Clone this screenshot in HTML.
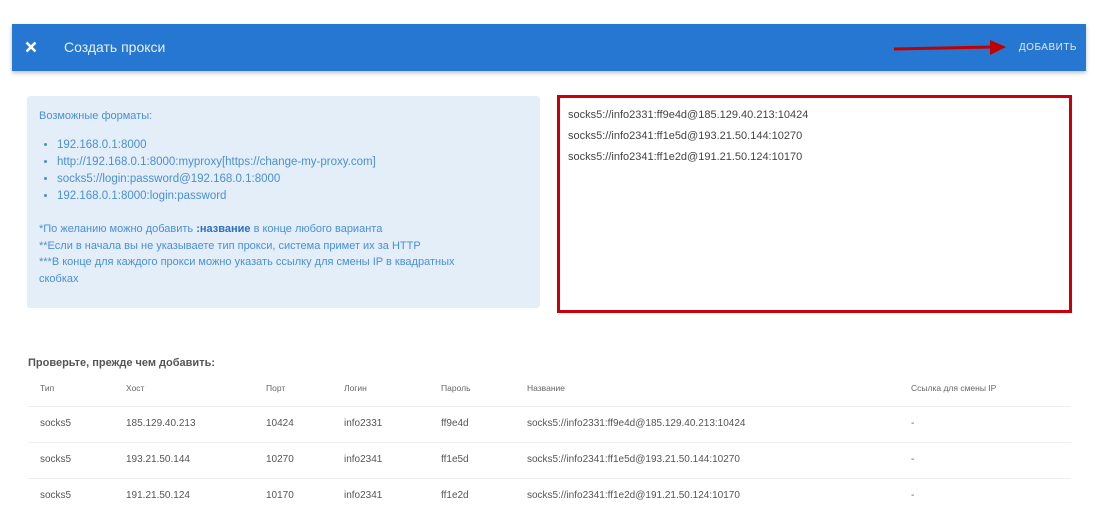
<!DOCTYPE html>
<html><head><meta charset="utf-8"><style>
body{margin:0;width:1099px;height:532px;background:#fff;font-family:"Liberation Sans",sans-serif;position:relative;overflow:hidden}
.hdr{position:absolute;left:12px;top:24px;width:1074px;height:47px;background:#2677d2;box-shadow:0 2px 4px rgba(0,0,0,.25)}
.hdr .t{position:absolute;left:52px;top:15px;color:#e8f0fb;font-size:14px}
.hdr .add{position:absolute;right:9px;top:18px;color:#dfe9f7;font-size:10px;letter-spacing:.5px}
.info{position:absolute;left:27px;top:96px;width:513px;height:212px;background:#e3eef9;border-radius:3px;color:#4a8fd6;font-size:11px}
.info p{margin:0;position:absolute;left:12px}
.info ul{margin:0;padding-left:30px;position:absolute;top:41px;line-height:17px;font-size:11.5px;list-style:disc}
.ta{position:absolute;left:557px;top:95px;width:509px;height:212px;border:3px solid #c8000a;color:#444;font-size:11px}
.ta div{position:absolute;left:8px}
.tt{position:absolute;left:28px;top:357px;font-size:11px;color:#555;font-weight:bold}
.c{position:absolute;font-size:10px;color:#555}
.h{font-size:8.5px;color:#666}
.ln{position:absolute;left:28px;width:1043px;height:1px;background:#eee}
</style></head><body>
<div class="hdr">
<svg style="position:absolute;left:13px;top:17px" width="12" height="12" viewBox="0 0 12 12"><path d="M1.5 1.5L10.5 10.5M10.5 1.5L1.5 10.5" stroke="#fff" stroke-width="2.6"/></svg>
<div class="t">Создать прокси</div>
<svg style="position:absolute;left:880px;top:15px" width="116" height="18" viewBox="0 0 116 18"><path d="M2 10L100 8" stroke="#c00000" stroke-width="3"/><path d="M98 1L114 8L98 16Z" fill="#c00000"/></svg>
<div class="add">ДОБАВИТЬ</div>
</div>
<div class="info">
<p style="top:14px">Возможные форматы:</p>
<ul><li>192.168.0.1:8000</li><li>http://192.168.0.1:8000:myproxy[https://change-my-proxy.com]</li><li>socks5://login:password@192.168.0.1:8000</li><li>192.168.0.1:8000:login:password</li></ul>
<p style="top:125px;line-height:16.5px">*По желанию можно добавить <b style="color:#2c6fc0">:название</b> в конце любого варианта<br>**Если в начала вы не указываете тип прокси, система примет их за HTTP<br>***В конце для каждого прокси можно указать ссылку для смены IP в квадратных<br>скобках</p>
</div>
<div class="ta">
<div style="top:11px">socks5://info2331:ff9e4d@185.129.40.213:10424</div>
<div style="top:32px">socks5://info2341:ff1e5d@193.21.50.144:10270</div>
<div style="top:53px">socks5://info2341:ff1e2d@191.21.50.124:10170</div>
</div>
<div class="tt">Проверьте, прежде чем добавить:</div>
<div class="c h" style="left:40px;top:383px">Тип</div><div class="c h" style="left:126px;top:383px">Хост</div><div class="c h" style="left:266px;top:383px">Порт</div><div class="c h" style="left:344px;top:383px">Логин</div><div class="c h" style="left:441px;top:383px">Пароль</div><div class="c h" style="left:527px;top:383px">Название</div><div class="c h" style="left:911px;top:383px">Ссылка для смены IP</div>
<div class="ln" style="top:406px"></div><div class="ln" style="top:442px"></div><div class="ln" style="top:478px"></div>
<div class="c" style="left:40px;top:418px">socks5</div><div class="c" style="left:126px;top:418px">185.129.40.213</div><div class="c" style="left:266px;top:418px">10424</div><div class="c" style="left:344px;top:418px">info2331</div><div class="c" style="left:441px;top:418px">ff9e4d</div><div class="c" style="left:527px;top:418px">socks5://info2331:ff9e4d@185.129.40.213:10424</div><div class="c" style="left:911px;top:418px">-</div>
<div class="c" style="left:40px;top:454px">socks5</div><div class="c" style="left:126px;top:454px">193.21.50.144</div><div class="c" style="left:266px;top:454px">10270</div><div class="c" style="left:344px;top:454px">info2341</div><div class="c" style="left:441px;top:454px">ff1e5d</div><div class="c" style="left:527px;top:454px">socks5://info2341:ff1e5d@193.21.50.144:10270</div><div class="c" style="left:911px;top:454px">-</div>
<div class="c" style="left:40px;top:490px">socks5</div><div class="c" style="left:126px;top:490px">191.21.50.124</div><div class="c" style="left:266px;top:490px">10170</div><div class="c" style="left:344px;top:490px">info2341</div><div class="c" style="left:441px;top:490px">ff1e2d</div><div class="c" style="left:527px;top:490px">socks5://info2341:ff1e2d@191.21.50.124:10170</div><div class="c" style="left:911px;top:490px">-</div>
</body></html>
